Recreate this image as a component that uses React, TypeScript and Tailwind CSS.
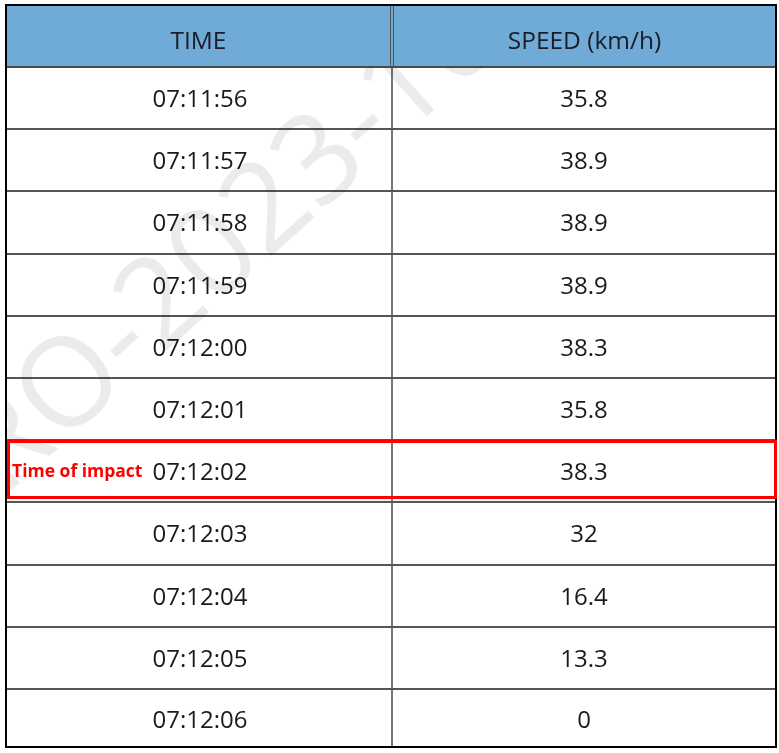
const ROWS: [string, string][] = [
  ['07:11:56', '35.8'],
  ['07:11:57', '38.9'],
  ['07:11:58', '38.9'],
  ['07:11:59', '38.9'],
  ['07:12:00', '38.3'],
  ['07:12:01', '35.8'],
  ['07:12:02', '38.3'],
  ['07:12:03', '32'],
  ['07:12:04', '16.4'],
  ['07:12:05', '13.3'],
  ['07:12:06', '0'],
];

const IMPACT = '07:12:02';

export default function App() {
  return (
    <div
      className="relative w-[779px] h-[753px] bg-white overflow-hidden"
      style={{ fontFamily: '"Open Sans", "Noto Sans", sans-serif' }}
    >
      <div className="ml-[5px] mt-[4px] w-[772px] border-2 border-black">
        {/* Header */}
        <div className="grid grid-cols-[387px_1fr] h-[62px] bg-[#70aad6] border-b-2 border-[#4a4a4a] text-[24.5px] text-[#1c1c28]">
          <div className="flex items-center justify-center pt-2 border-r-[4px] border-double border-[#555]">
            TIME
          </div>
          <div className="flex items-center justify-center pt-2">SPEED (km/h)</div>
        </div>

        {/* Body */}
        <div className="relative">
          {ROWS.map(([time, speed], i) => {
            const last = i === ROWS.length - 1;
            return (
              <div
                key={time}
                className={
                  'relative grid grid-cols-[386px_1fr] text-[24px] text-[#1a1a1a] ' +
                  (last ? 'h-[56px]' : 'h-[62.2px] border-b-2 border-[#555]')
                }
              >
                <div className={'flex items-center justify-center pl-[2px] border-r-2 border-[#777] ' + (last ? 'pt-[2px]' : '')}>
                  {time}
                </div>
                <div className={'flex items-center justify-center ' + (last ? 'pt-[2px]' : '')}>{speed}</div>
                {time === IMPACT && (
                  <>
                    <div className="absolute -top-[1px] h-[59px] left-0 -right-[2px] border-[3px] border-[#ff0000] z-10" />
                    <div className="absolute left-[5px] -top-[2px] bottom-0 flex items-center text-[17.5px] font-bold text-[#ff0000] z-10">
                      Time of impact
                    </div>
                  </>
                )}
              </div>
            );
          })}

          {/* Watermark, clipped to the body */}
          <div className="absolute inset-0 overflow-hidden pointer-events-none mix-blend-multiply">
            <div
              className="absolute left-[-36px] top-[334px] h-[120px] leading-[120px] text-[124px] whitespace-nowrap text-[#ebebeb]"
              style={{ transform: 'rotate(-42deg)', transformOrigin: '0 50%' }}
            >
              RO-2023-10
            </div>
          </div>
        </div>
      </div>
    </div>
  );
}
